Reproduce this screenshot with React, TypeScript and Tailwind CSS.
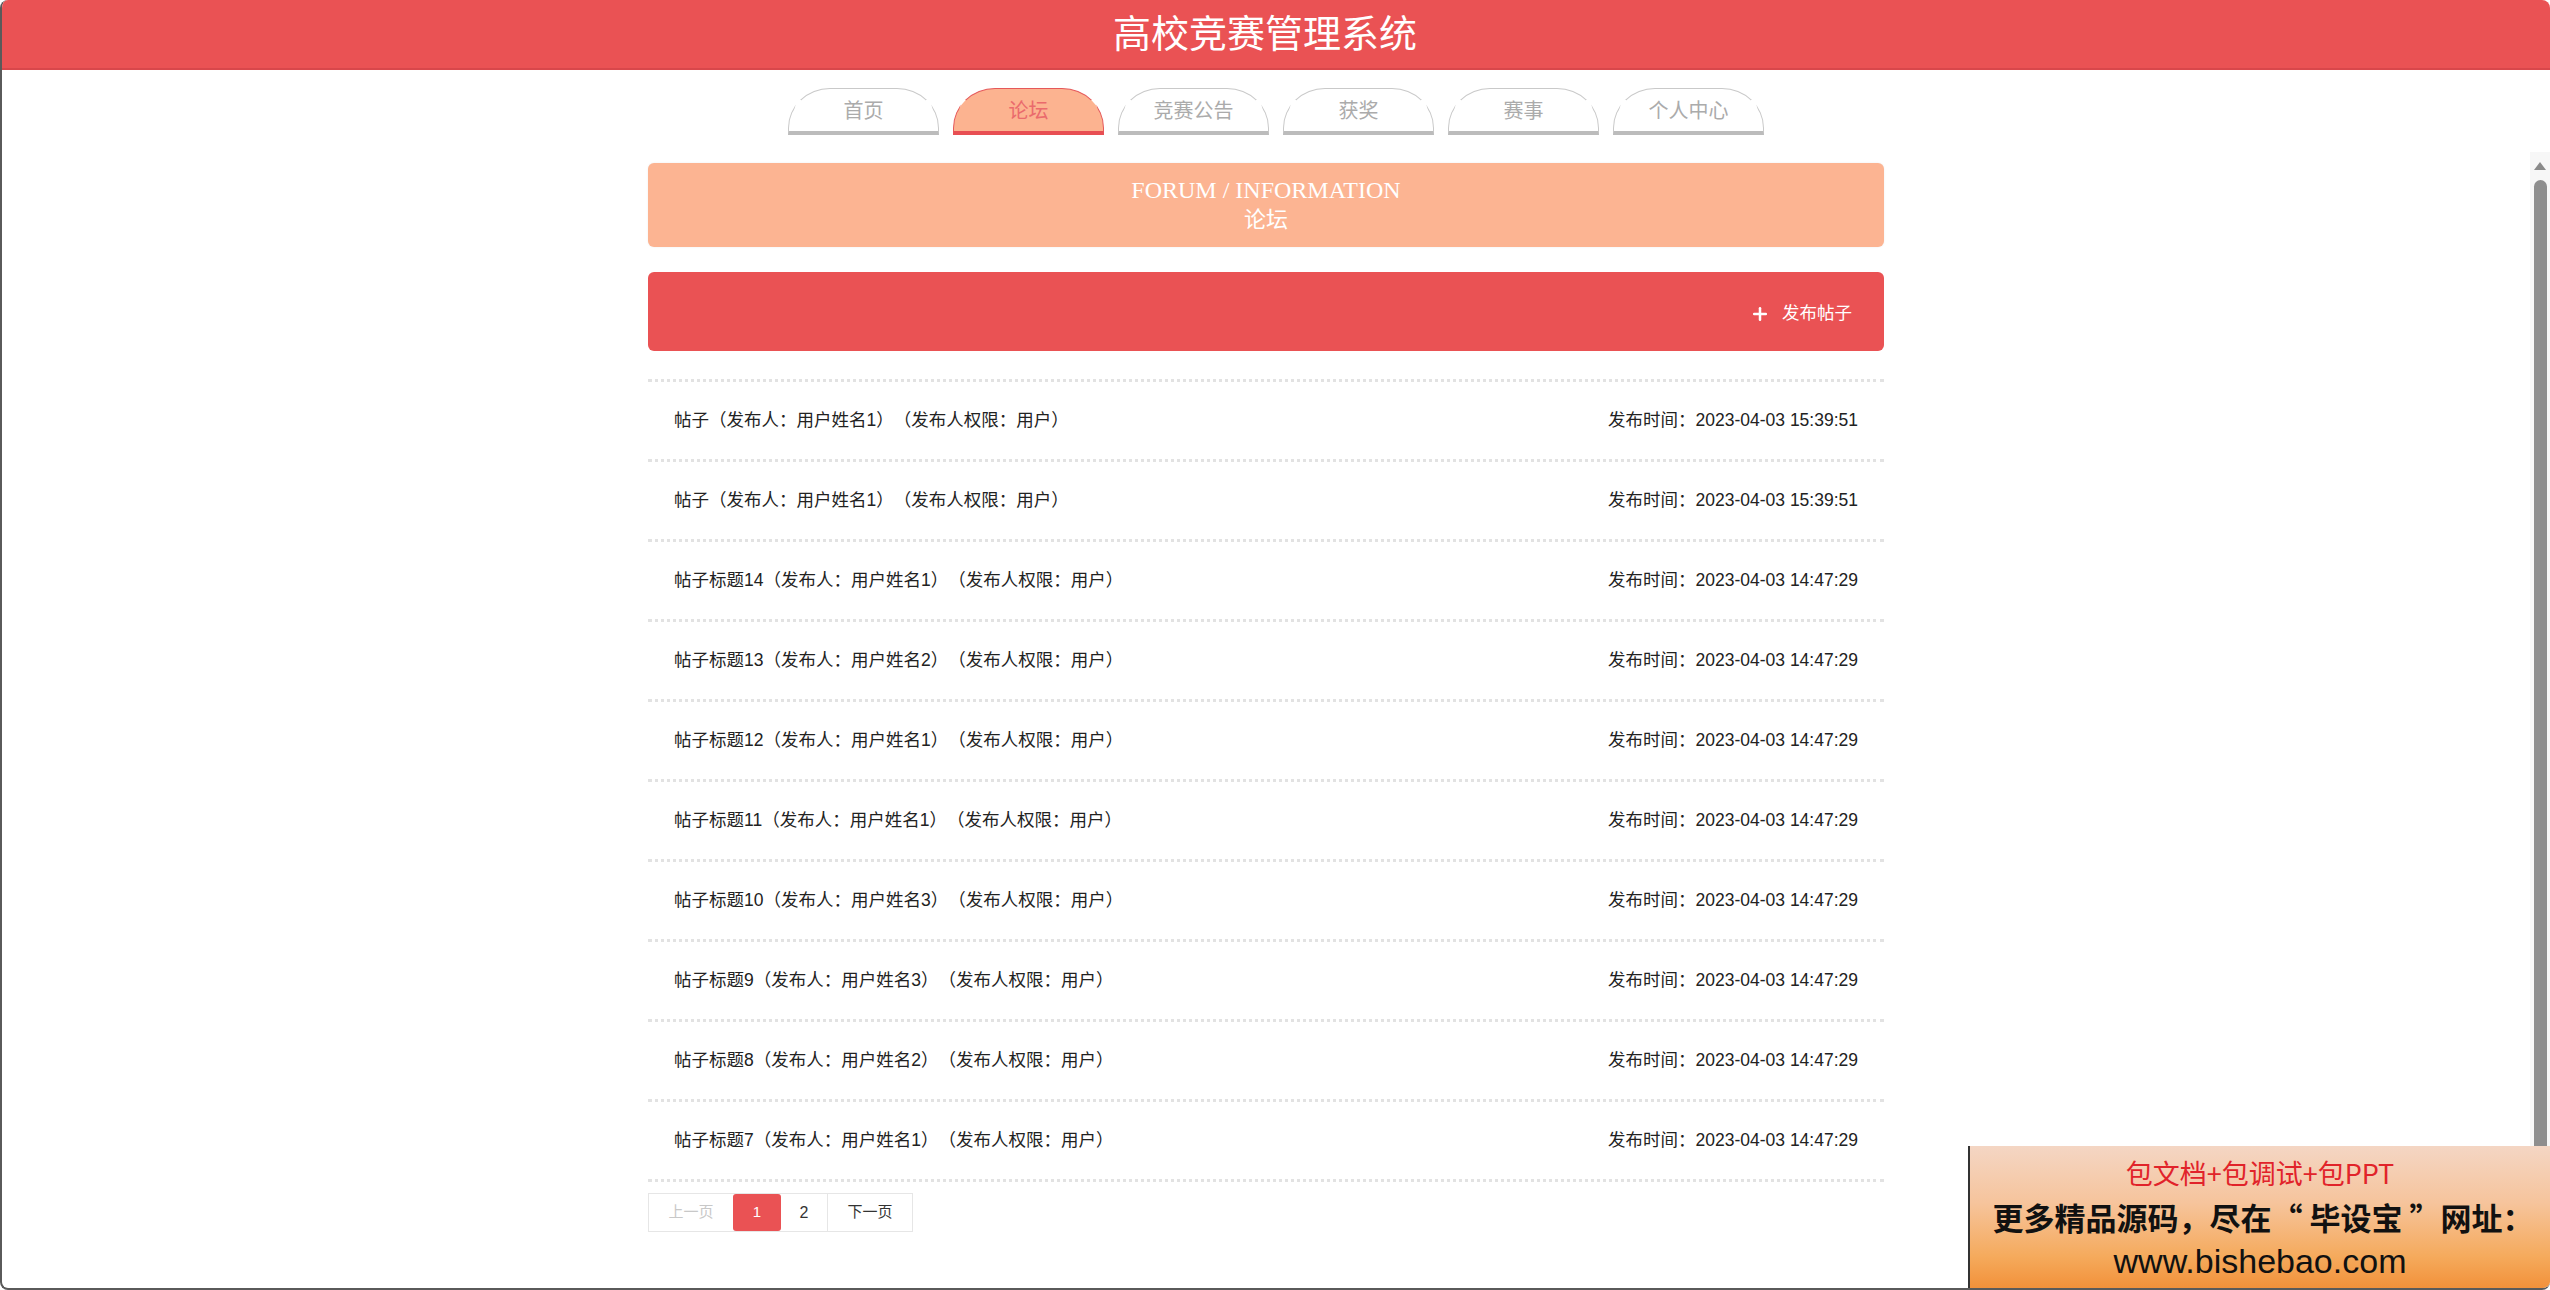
import { Plus } from "lucide-react";

const tabs = ["首页", "论坛", "竞赛公告", "获奖", "赛事", "个人中心"];

const posts = [
  { title: "帖子", user: "用户姓名1", time: "2023-04-03 15:39:51" },
  { title: "帖子", user: "用户姓名1", time: "2023-04-03 15:39:51" },
  { title: "帖子标题14", user: "用户姓名1", time: "2023-04-03 14:47:29" },
  { title: "帖子标题13", user: "用户姓名2", time: "2023-04-03 14:47:29" },
  { title: "帖子标题12", user: "用户姓名1", time: "2023-04-03 14:47:29" },
  { title: "帖子标题11", user: "用户姓名1", time: "2023-04-03 14:47:29" },
  { title: "帖子标题10", user: "用户姓名3", time: "2023-04-03 14:47:29" },
  { title: "帖子标题9", user: "用户姓名3", time: "2023-04-03 14:47:29" },
  { title: "帖子标题8", user: "用户姓名2", time: "2023-04-03 14:47:29" },
  { title: "帖子标题7", user: "用户姓名1", time: "2023-04-03 14:47:29" },
];

const sans = "font-['Liberation_Sans','Noto_Sans_CJK_SC',sans-serif]";

export default function App() {
  return (
    <div className={`relative h-[1290px] w-full overflow-hidden rounded-[8px] border-l-2 border-b-2 border-[#5a5a5a] bg-white [text-spacing-trim:space-all] ${sans}`}>
      {/* Header */}
      <header className="flex h-[70px] items-center justify-center border-b-2 border-[#d8474b] bg-[#ea5254] pr-[22px]">
        <h1 className="text-[38px] leading-none font-normal text-white">高校竞赛管理系统</h1>
      </header>

      <div className="flex">
        <main className="flex-1">
          {/* Nav tabs */}
          <nav className="mt-[18px] flex justify-center gap-[14px] pl-[20px]">
            {tabs.map((t) => {
              const active = t === "论坛";
              return (
                <div
                  key={t}
                  className={
                    active
                      ? "flex h-[47px] w-[151px] items-center justify-center rounded-tl-[42px_40px] rounded-tr-[42px_40px] border border-b-4 border-[#e5585a] border-b-[#e84f53] bg-[#fcb390] pt-[2px] text-[20px] text-[#ea6a6c]"
                      : "flex h-[47px] w-[151px] items-center justify-center rounded-tl-[42px_40px] rounded-tr-[42px_40px] border border-b-4 border-[#c9c9c9] border-b-[#bcbcbc] bg-white pt-[2px] text-[20px] text-[#ababab]"
                  }
                >
                  {t}
                </div>
              );
            })}
          </nav>

          <div className="mx-auto w-[1236px]">
            {/* Title box */}
            <div className="mt-[28px] flex h-[84px] flex-col items-center justify-center rounded-[6px] bg-[#fcb492] font-['Liberation_Serif','Noto_Sans_CJK_SC',serif] text-white shadow-[0_0_2px_rgba(0,0,0,0.08)]">
              <div className="text-[24px] leading-[30px]">FORUM / INFORMATION</div>
              <div className="text-[22px] leading-[30px]">论坛</div>
            </div>

            {/* Action bar */}
            <div className="mt-[25px] flex h-[79px] items-center justify-end rounded-[6px] bg-[#ea5254] pt-[4px] pr-[32px]">
              <button className="flex items-center gap-[12px] text-[17.5px] text-white">
                <Plus className="h-[20px] w-[20px]" strokeWidth={3} />
                发布帖子
              </button>
            </div>

            {/* Post list */}
            <ul className="mt-[28px] border-t-[3px] border-dotted border-[#e2e2e2]">
              {posts.map((p, i) => (
                <li
                  key={i}
                  className="flex h-[80px] items-center justify-between border-b-[3px] border-dotted border-[#e2e2e2] px-[26px] text-[17.5px] text-[#222]"
                >
                  <span>
                    {p.title}（发布人：{p.user}）（发布人权限：用户）
                  </span>
                  <span>发布时间：{p.time}</span>
                </li>
              ))}
            </ul>

            {/* Pagination */}
            <div className="mt-[11px] flex h-[39px] w-fit border border-[#e6e6e6] text-[15px]">
              <span className="flex w-[84px] items-center justify-center text-[#c8c8c8]">上一页</span>
              <span className="flex w-[48px] items-center justify-center rounded-[3px] bg-[#ea5254] text-white">1</span>
              <span className="flex w-[47px] items-center justify-center border-r border-[#e6e6e6] text-[16px] text-[#333]">2</span>
              <span className="flex w-[84px] items-center justify-center text-[#333]">下一页</span>
            </div>
          </div>
        </main>

        {/* Scrollbar */}
        <div className="mt-[82px] flex h-[1138px] w-[20px] flex-col items-center bg-[#f7f7f7]">
          <svg width="12" height="8" viewBox="0 0 12 8" className="mt-[10px]">
            <path d="M6 0 L12 8 L0 8 Z" fill="#8a8a8a" />
          </svg>
          <div className="mt-[10px] w-[13px] flex-1 rounded-[7px] bg-[#8e8e8e]" />
        </div>
      </div>

      {/* Ad overlay */}
      <div className="absolute right-0 bottom-0 flex h-[142px] w-[582px] flex-col items-center justify-center border-l-2 border-[#333] bg-[linear-gradient(180deg,#f4d6c4_0%,#f6c49c_40%,#f5aa5c_78%,#f2913a_100%)] font-['Noto_Sans_CJK_SC','Liberation_Sans',sans-serif]">
        <div className="text-[27px] leading-[44px] text-[#e1232a]">包文档+包调试+包PPT</div>
        <div className="pl-[6px] text-[31px] leading-[44px] font-bold text-[#111]">更多精品源码，尽在“ 毕设宝 ”网址：</div>
        <div className="font-['Liberation_Sans',sans-serif] text-[34px] leading-[44px] text-[#111]">www.bishebao.com</div>
      </div>
    </div>
  );
}
